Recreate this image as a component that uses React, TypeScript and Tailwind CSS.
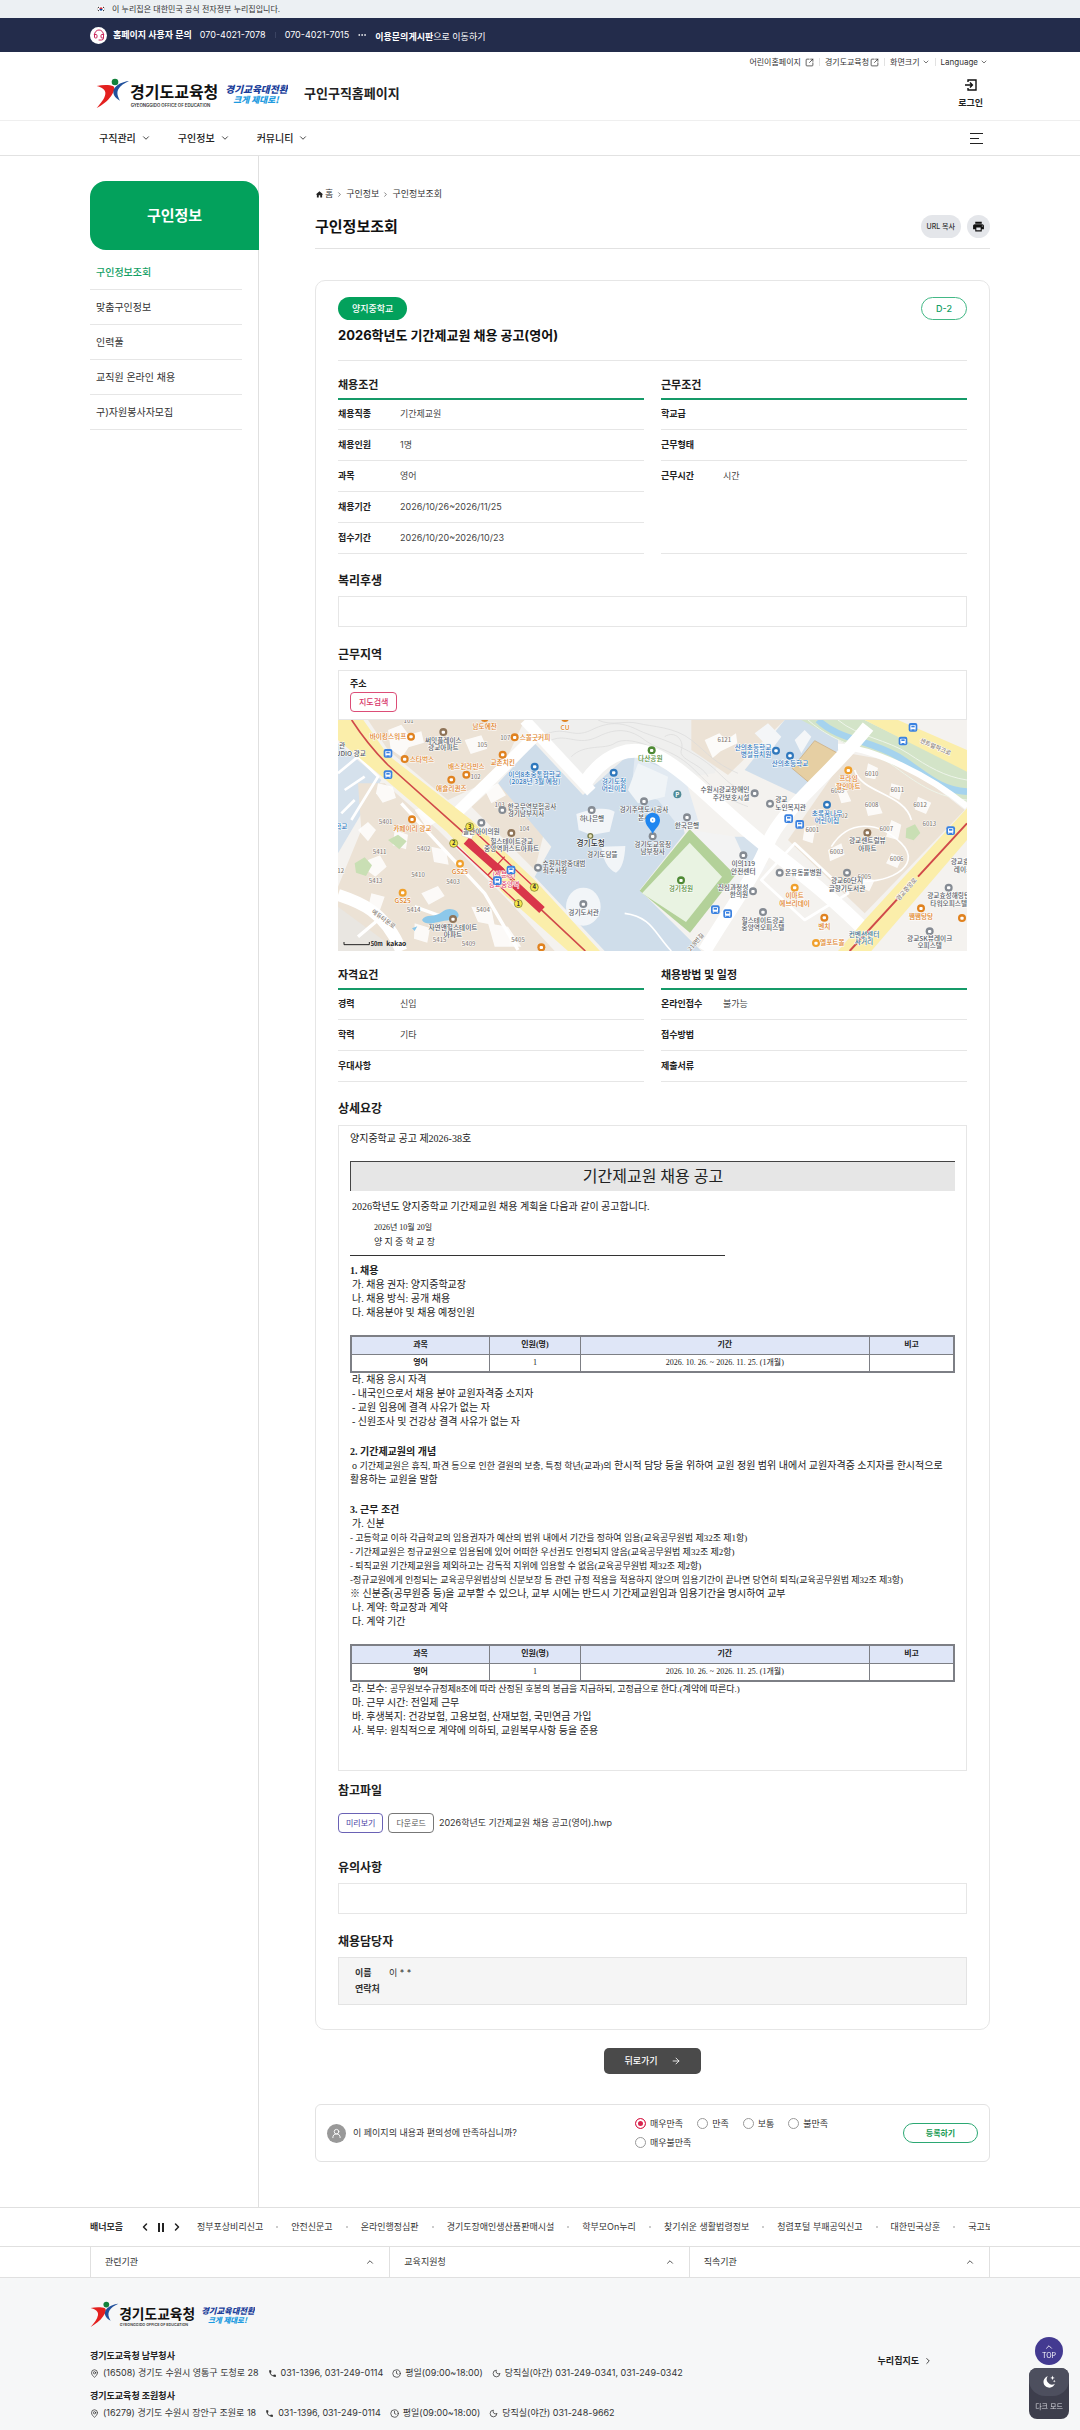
import type { ReactNode } from "react";
import {
  ArrowRight,
  ChevronDown,
  ChevronLeft,
  ChevronRight,
  ChevronUp,
  Clock,
  Ellipsis,
  Headset,
  MapPin,
  Moon,
  SquareArrowOutUpRight,
  UserRound,
} from "lucide-react";
import { MdHome, MdPhone, MdPrint } from "react-icons/md";

const menus = ["구직관리", "구인정보", "커뮤니티"];
const sideMenus = ["구인정보조회", "맞춤구인정보", "인력풀", "교직원 온라인 채용", "구)자원봉사자모집"];
const banners = [
  "정부포상비리신고",
  "안전신문고",
  "온라인행정심판",
  "경기도장애인생산품판매시설",
  "학부모On누리",
  "찾기쉬운 생활법령정보",
  "청렴포털 부패공익신고",
  "대한민국상훈",
  "국고보조금",
];
const offices = [
  {
    name: "경기도교육청 남부청사",
    address: "(16508) 경기도 수원시 영통구 도청로 28",
    tel: "031-1396, 031-249-0114",
    night: "당직실(야간) 031-249-0341, 031-249-0342",
  },
  {
    name: "경기도교육청 조원청사",
    address: "(16279) 경기도 수원시 장안구 조원로 18",
    tel: "031-1396, 031-249-0114",
    night: "당직실(야간) 031-248-9662",
  },
];

const ORANGE = "#e0821f";
const GRAY = "#555a63";
const BLUE = "#2f78bd";
const GREEN = "#4f8a35";
const BROWN = "#8f7458";

type Place = { x: number; y: number; t: string[]; c: string; ix?: number; iy?: number; ic?: string; dx?: number };

const places: Place[] = [
  { x: 150, y: 57, t: ["바이킹스워프"], c: ORANGE, ix: 219, iy: 50 },
  { x: 316, y: 69, t: ["써밋플레이스", "광교아파트"], c: GRAY, ix: 316, iy: 36, ic: BROWN },
  { x: 440, y: 26, t: ["남도예찬"], c: ORANGE, ix: 440, iy: -6 },
  { x: 681, y: 29, t: ["CU"], c: ORANGE, ix: 681, iy: -6 },
  { x: 591, y: 60, t: ["스몰굿커피"], c: ORANGE, ix: 530, iy: 52 },
  { x: 252, y: 125, t: ["스타벅스"], c: ORANGE, ix: 200, iy: 117 },
  { x: 385, y: 146, t: ["배스킨라빈스"], c: ORANGE, ix: 385, iy: 164 },
  { x: 340, y: 212, t: ["애슐리퀸즈"], c: ORANGE, ix: 340, iy: 179 },
  { x: 494, y: 136, t: ["교촌치킨"], c: ORANGE, ix: 494, iy: 104 },
  { x: 590, y: 171, t: ["이의8초중통합학교", "(2028년 3월 예정)"], c: BLUE, ix: 590, iy: 140 },
  { x: 828, y: 191, t: ["경기도청", "어린이집"], c: BLUE, ix: 827, iy: 158 },
  { x: 937, y: 124, t: ["다산공원"], c: GREEN, ix: 941, iy: 91 },
  { x: 582, y: 266, t: ["한국무역보험공사", "경기남부지사"], c: GRAY, ix: 493, iy: 270, dx: -18 },
  { x: 762, y: 303, t: ["하나은행"], c: GRAY, ix: 761, iy: 270 },
  { x: 918, y: 277, t: ["경기주택도시공사", "본사"], c: GRAY, ix: 918, iy: 244 },
  { x: 793, y: 410, t: ["경기도담뜰"], c: GRAY },
  { x: 944, y: 380, t: ["경기도교육청", "남부청사"], c: GRAY, ix: 944, iy: 349 },
  { x: 678, y: 438, t: ["수원지방중대범", "죄수사청"], c: GRAY, ix: 600, iy: 443, dx: -27 },
  { x: 521, y: 372, t: ["힐스테이트광교", "중앙역퍼스트아파트"], c: GRAY, ix: 520, iy: 339, ic: BROWN },
  { x: 430, y: 341, t: ["올찬아이의원"], c: GRAY, ix: 430, iy: 308 },
  { x: 223, y: 332, t: ["카페이리 광교"], c: ORANGE, ix: 222, iy: 298 },
  { x: 366, y: 463, t: ["GS25"], c: ORANGE, ix: 366, iy: 431, ic: "#f0a02c" },
  { x: 194, y: 550, t: ["GS25"], c: ORANGE, ix: 194, iy: 518, ic: "#f0a02c" },
  { x: 345, y: 630, t: ["자연앤힐스테이트", "아파트"], c: GRAY, ix: 345, iy: 597, ic: BROWN },
  { x: 737, y: 585, t: ["경기도서관"], c: GRAY, ix: 736, iy: 552 },
  { x: 10, y: 326, t: ["학교"], c: BLUE },
  { x: 12, y: 84, t: ["관"], c: GRAY },
  { x: 38, y: 107, t: ["UDIO 광교"], c: GRAY },
  { x: 1245, y: 89, t: ["산의초등학교", "병설유치원"], c: BLUE, ix: 1314, iy: 92, dx: 9 },
  { x: 1356, y: 139, t: ["산의초등학교"], c: BLUE, ix: 1356, iy: 107 },
  { x: 1161, y: 217, t: ["수원시광교장애인", "주간보호시설"], c: GRAY, ix: 1250, iy: 220, dx: 18 },
  { x: 1330, y: 247, t: ["광교", "노인복지관"], c: GRAY, ix: 1296, iy: 251, dx: 28 },
  { x: 1047, y: 325, t: ["한국은행"], c: GRAY, ix: 1047, iy: 292 },
  { x: 1467, y: 287, t: ["초록꿈나무", "어린이집"], c: BLUE, ix: 1467, iy: 254 },
  { x: 1531, y: 184, t: ["프라임", "할인마트"], c: ORANGE, ix: 1531, iy: 151, ic: "#f0a02c" },
  { x: 1588, y: 370, t: ["광교센트럴뷰", "아파트"], c: GRAY, ix: 1588, iy: 338, ic: BROWN },
  { x: 1216, y: 439, t: ["이의119", "안전센터"], c: GRAY, ix: 1216, iy: 406 },
  { x: 1396, y: 465, t: ["온유동물병원"], c: GRAY, ix: 1325, iy: 458 },
  { x: 1029, y: 514, t: ["경기정원"], c: GREEN, ix: 1029, iy: 481 },
  { x: 1185, y: 510, t: ["진심과정성", "한의원"], c: GRAY, ix: 1245, iy: 514, dx: 18 },
  { x: 1370, y: 535, t: ["이마트", "에브리데이"], c: ORANGE, ix: 1370, iy: 503, ic: "#f0a02c" },
  { x: 1527, y: 490, t: ["광교60단지", "글향기도서관"], c: GRAY, ix: 1527, iy: 458 },
  { x: 1275, y: 609, t: ["힐스테이트광교", "중앙역오피스텔"], c: GRAY, ix: 1275, iy: 576 },
  { x: 1459, y: 626, t: ["벤치"], c: ORANGE, ix: 1459, iy: 593 },
  { x: 1483, y: 675, t: ["엘포트몰"], c: ORANGE, ix: 1434, iy: 669, ic: "#f0a02c" },
  { x: 1578, y: 651, t: ["컨벤션센터", "사거리"], c: "#3f7390" },
  { x: 1875, y: 433, t: ["광교효성", "레이크"], c: GRAY },
  { x: 1832, y: 535, t: ["광교효성해링턴", "타워오피스텔"], c: GRAY, ix: 1832, iy: 503 },
  { x: 1749, y: 598, t: ["쨈쨈탕탕"], c: ORANGE, ix: 1749, iy: 565 },
  { x: 1775, y: 663, t: ["광교SK뷰레이크", "오피스텔"], c: GRAY, ix: 1775, iy: 634 },
  { x: 610, y: 682, t: [], c: ORANGE, ix: 610, iy: 682 },
  { x: 1872, y: 594, t: [], c: ORANGE, ix: 1872, iy: 594 },
];

const lots: [string, number, number][] = [
  ["101", 212, 8], ["107", 502, 59], ["105", 433, 81], ["102", 413, 176], ["103", 485, 262], ["104", 559, 332],
  ["5401", 143, 312], ["5402", 257, 393], ["5411", 125, 403], ["5410", 240, 470], ["5413", 113, 488],
  ["5403", 345, 491], ["5414", 227, 577], ["5404", 435, 577], ["5415", 305, 667], ["5409", 392, 677],
  ["5405", 540, 667], ["12", 8, 458], ["6121", 1159, 67], ["6009", 1499, 219], ["6010", 1601, 168],
  ["6011", 1678, 215], ["6012", 1746, 261], ["6008", 1601, 261], ["6002", 1509, 294], ["6013", 1774, 318],
  ["6007", 1645, 333], ["6001", 1423, 336], ["6003", 1496, 403], ["6006", 1676, 422], ["6005", 1579, 476],
];

const whiteBuildings = [
  "M150 30l40-16 22 30 38-10 8 34-46 14-20 30-34-24z",
  "M120 190l44 10 10 34-40 14-20-28z",
  "M90 420l36-14 20 34-34 30-24-18z",
  "M230 270l60-24 30 44-54 34z",
  "M170 330l40 14-6 44-40-12z",
  "M280 380l44 10 8 44-44-8z",
  "M60 330l30-24 24 24-24 34z",
  "M100 520l40 10-14 40-34-14z",
  "M250 520l50-22 20 30-48 26z",
  "M400 560l60 6 10 50-50-10z",
  "M450 610l60 10 40 60-80 0z",
  "M230 610l46 14-8 44-40-12z",
  "M380 60l50-14 18 40-50 16z",
  "M440 210l40-20 24 36-44 24z",
  "M1100 60l44-20 20 20 30-20 4 30-50 24-24 20z",
  "M1490 190l30 10 20 44-30 6z",
  "M1590 130l30 14-8 34-30-6z",
  "M1660 190l34 10-10 40-30-14z",
  "M1580 250l40-4 14 34-44 8z",
  "M1740 230l40 18-16 34-34-14z",
  "M1660 300l30 14-10 46-36-10z",
  "M1470 390l40-20 10 34-44 20z",
  "M1660 400l34 10-16 34-34-14z",
  "M1570 470l40 10-16 34-30-14z",
  "M1400 320l34-4-10 54-30-10z",
];

function Bus({ x, y }: { x: number; y: number }) {
  return (
    <g transform={`translate(${x} ${y})`}>
      <rect x="-13" y="-13" width="26" height="26" rx="6" fill="#3b82e0" />
      <rect x="-8" y="-7" width="16" height="13" rx="2" fill="#fff" />
      <rect x="-5" y="-5" width="10" height="5" fill="#3b82e0" />
      <path d="M-6 6v3M6 6v3" stroke="#fff" strokeWidth="3" />
    </g>
  );
}

function AreaMap() {
  return (
    <svg
      viewBox="0 0 1887 693"
      role="img"
      aria-label="근무지역 지도"
      className="block w-full font-['Noto_Sans_CJK_KR',sans-serif] font-medium"
    >
      <rect width="1887" height="693" fill="#f4f2ef" />
      {/* land use blocks */}
      <path d="M90 0H560L480 170 330 240 150 90z" fill="#ece2d5" />
      <path d="M400 260L480 190 620 330 590 450 440 300z" fill="#ece2d5" />
      <path d="M0 70L130 180 0 400z" fill="#d5e1ec" />
      <path d="M60 190L140 190 300 330 500 530 650 693H0V500L70 330z" fill="#ece2d5" />
      <path d="M0 560L180 693H0z" fill="#e9e6e1" />
      <path d="M0 160l60-50 60 60-80 130M20 210l60-40M10 280l40-40" fill="none" stroke="#fff" strokeWidth="8" />
      <path d="M560 0H1180L1130 160 760 210 700 160z" fill="#efefee" />
      <path d="M480 190L590 70 735 225 900 80 1010 180 1040 340 905 510 1090 693H800L590 470 640 380z" fill="#cfddea" />
      <path d="M890 110L1040 170 1080 300 1030 330 960 240 880 220z" fill="#e2eaf2" />
      <path d="M1060 0H1340L1170 165 1060 90z" fill="#ece2d5" />
      <path d="M1340 0H1500L1500 90 1400 235 1220 150z" fill="#d0deeb" />
      <path d="M1250 40l40-30 40 40-30 40zM1370 60l30-30 20 20-30 50z" fill="#f4f6f8" />
      <path d="M1430 62L1500 100 1428 200 1362 145z" fill="#e6cfa3" stroke="#c9a877" strokeWidth="2" />
      <path d="M1530 100L1700 130 1880 270 1580 580 1350 360z" fill="#ece2d5" />
      <path d="M1060 330L1190 350 1290 440 1190 540 1100 470z" fill="#f3f3f3" />
      <path d="M1190 350l40 0 60 60-50 50z" fill="#d5e1ec" />
      {/* riverside */}
      <path d="M1390 0H1580L1887 150V245L1700 150 1520 70z" fill="#d3e4c8" />
      <path d="M1440 0C1500 60 1600 60 1680 110S1800 210 1887 215" fill="none" stroke="#a5d3ee" strokeWidth="20" />
      <path d="M1410 0C1500 80 1590 80 1670 140S1800 230 1887 240M1500 0C1560 50 1650 60 1710 100S1820 170 1887 180" fill="none" stroke="#eef5ea" strokeWidth="3" />
      {/* contour lines of the hill */}
      <g fill="none" stroke="#d9d9d9" strokeWidth="2">
        <path d="M610 50C680 10 700 60 760 30S860 10 900 30 1000 60 1080 110 1150 190 1250 230" />
        <path d="M640 60C690 40 720 80 780 50S880 30 920 60 1010 90 1070 150 1150 230 1230 260" />
        <path d="M700 110C740 70 800 90 830 70S920 70 960 90 1050 140 1080 190" />
        <path d="M780 0C820 20 860 0 900 10S1010 20 1060 60 1130 130 1200 160" />
        <path d="M980 50c30-20 60 10 50 40s60 40 80 80" />
      </g>
      {/* white streets */}
      <g fill="none" stroke="#fff" strokeLinejoin="round">
        <path d="M560 0L760 215" strokeWidth="34" />
        <path d="M345 290L590 50" strokeWidth="34" />
        <path d="M740 190C800 100 880 70 960 110S1130 250 1250 350 1450 500 1590 640" strokeWidth="42" />
        <path d="M1100 693C1180 560 1250 470 1290 370S1480 160 1590 20" strokeWidth="40" />
        <path d="M0 525C60 545 140 570 190 693" strokeWidth="36" />
        <path d="M190 250L440 520 540 690M60 650L120 600M230 560L340 600" strokeWidth="10" />
        <path d="M1500 80C1600 80 1780 170 1887 260" strokeWidth="18" />
        <path d="M1270 480L1370 370 1530 520 1400 600z" strokeWidth="8" />
        <path d="M1480 380C1530 300 1620 300 1690 370S1640 500 1540 480M1550 150C1570 220 1700 220 1720 300" strokeWidth="5" />
        <path d="M860 580C940 590 950 640 1000 693" strokeWidth="5" />
      </g>
      <path d="M715 282C770 262 810 262 830 275L815 335 760 345 722 330zM790 380l72-2c-2 40-10 70-28 80-24-10-40-40-44-78z" fill="#f2f5f8" />
      <ellipse cx="736" cy="560" rx="52" ry="57" fill="#f2f5f8" />
      <path d="M900 130l90 40-10 60-80 20-30-40z" fill="#f0f4f7" />
      <g fill="#fff" opacity="0.85">
        {whiteBuildings.map((d) => (
          <path d={d} key={d} />
        ))}
      </g>
      <path d="M50 430l30-18 22 24-18 32-30-10zM150 360l30-16 26 20-22 24zM1705 325l26-12 16 26-20 22-24-8z" fill="#c9dfb4" />
      <path d="M252 600c10-20 40-6 60-24s50-6 50 10-30 14-50 18-50 14-60-4zM222 625l16-6-8 14z" fill="#8cc8ea" />
      {/* garden */}
      <path d="M1055 328L1192 465 1056 638 905 512z" fill="#b3d199" />
      <path d="M1055 368L1152 470 1044 606 912 520z" fill="#e9f3e2" />
      {/* main roads and the railway */}
      <path d="M0 0H76L150 105 400 300 590 480 786 693H690L506 530 326 335 126 165 0 60z" fill="#fbeeaa" />
      <path d="M1580 0H1680L1887 90V155L1620 20z" fill="#fbeeaa" />
      <path d="M1887 265V360L1600 693H1500L1580 600z" fill="#fbeeaa" />
      <path d="M41 0C80 60 110 95 150 135L390 350 600 560 742 693" fill="none" stroke="#d04a4a" strokeWidth="5" />
      <path d="M1887 310L1740 470M1680 535L1535 693" fill="none" stroke="#d04a4a" strokeWidth="6" />
      <path d="M385 362L490 455M528 492L612 570" stroke="#d9364a" strokeWidth="24" />
      <g fill="none" stroke="#d9364a" strokeWidth="4">
        <path d="M395 320L589 502M347 370L541 551M450 465L500 410M480 432L530 480" />
      </g>
      <path d="M375 335l30 10-4 12-30-10z" fill="#fff" stroke="#bbb" />
      <g fontSize="18" fill="#8a8178" textAnchor="middle" stroke="#fff" strokeWidth="3" paintOrder="stroke">
        {lots.map(([t, x, y]) => (
          <text key={t + x} x={x} y={y}>{t}</text>
        ))}
        <text x="0" y="0" transform="translate(133 602) rotate(36)">에듀타운로</text>
        <text x="0" y="0" transform="translate(1790 86) rotate(24)">센트럴파크로</text>
        <text x="0" y="0" transform="translate(1710 512) rotate(-49)">광교중앙로</text>
        <text x="0" y="0" transform="translate(1078 670) rotate(-50)">218번길</text>
      </g>
      {places.map((p) => (
        <g key={p.x + "-" + p.y}>
          {p.ix !== undefined && (
            <g>
              <circle cx={p.ix} cy={p.iy} r="12" fill={p.ic ?? (p.c === GRAY ? "#858b93" : p.c)} />
              <rect x={p.ix - 5} y={(p.iy ?? 0) - 4} width="10" height="9" rx="3" fill="#fff" />
            </g>
          )}
          <g fontSize="20" textAnchor="middle" fill={p.c} stroke="#fff" strokeWidth="3" paintOrder="stroke">
            {p.t.map((line, i) => (
              <text key={line} x={p.x + (i ? p.dx ?? 0 : 0)} y={p.y + i * 22}>{line}</text>
            ))}
          </g>
        </g>
      ))}
      <circle cx="757" cy="348" r="7" fill="#e8e3b8" stroke="#777a4a" strokeWidth="4" />
      <text x="758" y="378" fontSize="23" textAnchor="middle" fill="#33373d" stroke="#fff" strokeWidth="3" paintOrder="stroke">경기도청</text>
      <g fontSize="20" textAnchor="middle" fill="#e2476a" stroke="#fff" strokeWidth="3" paintOrder="stroke">
        <text x="498" y="472">(신분당)</text>
        <text x="498" y="500">광교중앙역</text>
      </g>
      <g fontSize="18" fontWeight="700" textAnchor="middle">
        {[[395, 320, 3], [347, 370, 2], [589, 502, 4], [541, 551, 1]].map(([x, y, n]) => (
          <g key={n}>
            <circle cx={x} cy={y} r="12" fill="#f5e84c" stroke="#6d6a2b" strokeWidth="2" />
            <text x={x} y={y + 6} fill="#333">{n}</text>
          </g>
        ))}
      </g>
      {[[150, 100], [150, 164], [519, 450], [478, 482], [1725, 22], [1695, 63], [1352, 296], [1385, 313], [1838, 332], [1132, 569], [1169, 581]].map(
        ([x, y]) => (
          <Bus key={`${x}-${y}`} x={x} y={y} />
        ),
      )}
      <circle cx="1018" cy="223" r="12" fill="#4f8a96" />
      <text x="1018" y="230" fontSize="18" fontWeight="700" textAnchor="middle" fill="#fff">P</text>
      <path d="M944 342c-6-16-22-24-22-42a22 22 0 0 1 44 0c0 18-16 26-22 42z" fill="#1f86f0" />
      <circle cx="944" cy="300" r="8" fill="#fff" />
      <circle cx="944" cy="300" r="2" fill="#1f86f0" />
      <path d="M18 666v8h76v-8" fill="none" stroke="#222" strokeWidth="3" />
      <text x="98" y="679" fontSize="17" fontWeight="700" fill="#222">50m</text>
      <text x="145" y="679" fontSize="20" fontWeight="700" fill="#222">kakao</text>
    </svg>
  );
}

function Logo({ className }: { className: string }) {
  return (
    <svg viewBox="0 0 576 93" role="img" aria-label="경기도교육청" className={className}>
      <circle cx="57" cy="12" r="10" fill="#12813b" />
      <path d="M2 24C20 20 42 20 52 25c7 5 2 17-6 28C36 68 18 82 2 90c13-15 24-28 26-42C30 36 18 28 2 24z" fill="#e3201f" />
      <path d="M99 9C80 11 61 20 54 33c-6 13 2 27 18 35-8-14-10-24-5-34 6-11 18-19 32-25z" fill="#20509c" />
      <g className="font-['Noto_Sans_CJK_KR',sans-serif]">
        <text x="102" y="61" fontSize="48" fontWeight="700" fill="#111">경기도교육청</text>
        <g fontStyle="italic" fontWeight="900">
          <text x="388" y="46" fontSize="29" fill="#1c3f9b">경기교육대전환</text>
          <text x="412" y="76" fontSize="26" fill="#1d9be0">크게 제대로!</text>
        </g>
      </g>
      <text x="104" y="86" fontSize="13" fontWeight="600" fill="#333" className="font-['Inter',sans-serif]">GYEONGGIDO OFFICE OF EDUCATION</text>
    </svg>
  );
}

function Title({ children, className = "" }: { children: ReactNode; className?: string }) {
  return <h4 className={`text-xs leading-5 font-bold text-[#1d1d1d] ${className}`}>{children}</h4>;
}

function InfoList({ title, rows }: { title: string; rows: [string, string][] }) {
  return (
    <section className="flex flex-1 flex-col">
      <h4 className="border-b-2 border-[#159a68] pb-[5px] text-[11px] leading-4 font-bold text-[#1d1d1d]">{title}</h4>
      <dl className="flex flex-1 flex-col">
        {rows.map(([label, value]) => (
          <div className="flex border-b border-[#e6e6e6] pt-2 pb-2 leading-[14px] first:pt-[7px] last:flex-1" key={label}>
            <dt className="w-[62px] font-bold text-[#222]">{label}</dt>
            <dd className="text-[#444]">{value}</dd>
          </div>
        ))}
      </dl>
    </section>
  );
}

function PeriodTable() {
  return (
    <table className="w-full table-fixed border-collapse border-2 border-[#7d7f85] text-center text-[8px] leading-[14px]">
      <thead>
        <tr className="h-[18px] bg-[#dfe6f7]">
          <th className="w-[23%] border border-[#7d7f85]">과목</th>
          <th className="w-[15%] border border-[#7d7f85]">인원(명)</th>
          <th className="border border-[#7d7f85]">기간</th>
          <th className="w-[14%] border border-[#7d7f85]">비고</th>
        </tr>
      </thead>
      <tbody>
        <tr className="h-[18px]">
          <td className="border border-[#7d7f85] font-bold">영어</td>
          <td className="border border-[#7d7f85]">1</td>
          <td className="border border-[#7d7f85]">2026. 10. 26. ~ 2026. 11. 25. (1개월)</td>
          <td className="border border-[#7d7f85]"></td>
        </tr>
      </tbody>
    </table>
  );
}

function Notice() {
  return (
    <article className="mt-[6px] border border-[#e6e6e6] px-[11px] pt-[6px] pb-8 font-['Liberation_Serif','Noto_Sans_CJK_KR',serif] text-[10px] leading-[14px] break-keep text-[#222]">
      <p>양지중학교 공고 제2026-38호</p>
      <h5 className="mt-[15px] border-t border-l border-[#444] bg-[#e6e6e6] text-center text-base leading-[29px]">기간제교원 채용 공고</h5>
      <p className="mt-[9px] pl-[2px]">2026학년도 양지중학교 기간제교원 채용 계획을 다음과 같이 공고합니다.</p>
      <div className="mt-[7px] w-[62%] border-b border-[#333] pb-[6px] pl-6">
        <p className="text-[8px]">2026년 10월 20일</p>
        <p className="text-[9px]">양 지 중 학 교 장</p>
      </div>
      <p className="mt-2 font-bold">1. 채용</p>
      <div className="mb-[15px] pl-[2px]">
        <p>가. 채용 권자: 양지중학교장</p>
        <p>나. 채용 방식: 공개 채용</p>
        <p>다. 채용분야 및 채용 예정인원</p>
      </div>
      <PeriodTable />
      <div className="mb-4 pl-[2px]">
        <p>라. 채용 응시 자격</p>
        <p>- 내국인으로서 채용 분야 교원자격증 소지자</p>
        <p>- 교원 임용에 결격 사유가 없는 자</p>
        <p>- 신원조사 및 건강상 결격 사유가 없는 자</p>
      </div>
      <p className="font-bold">2. 기간제교원의 개념</p>
      <p className="mb-4 indent-[2px]">
        o <span className="text-[9px]">기간제교원은 휴직, 파견 등으로 인한 결원의 보충, 특정 학년(교과)의</span> 한시적 담당 등을 위하여 교원 정원 범위 내에서
        교원자격증 소지자를 한시적으로 활용하는 교원을 말함
      </p>
      <p className="font-bold">3. 근무 조건</p>
      <p className="pl-[2px]">가. 신분</p>
      <div className="text-[9px]">
        <p>- 고등학교 이하 각급학교의 임용권자가 예산의 범위 내에서 기간을 정하여 임용(교육공무원법 제32조 제1항)</p>
        <p>- 기간제교원은 정규교원으로 임용됨에 있어 어떠한 우선권도 인정되지 않음(교육공무원법 제32조 제2항)</p>
        <p>- 퇴직교원 기간제교원을 제외하고는 감독적 지위에 임용할 수 없음(교육공무원법 제32조 제2항)</p>
        <p>-정규교원에게 인정되는 교육공무원법상의 신분보장 등 관련 규정 적용을 적용하지 않으며 임용기간이 끝나면 당연히 퇴직(교육공무원법 제32조 제3항)</p>
      </div>
      <p>※ 신분증(공무원증 등)을 교부할 수 있으나, 교부 시에는 반드시 기간제교원임과 임용기간을 명시하여 교부</p>
      <div className="mb-[15px] pl-[2px]">
        <p>나. 계약: 학교장과 계약</p>
        <p>다. 계약 기간</p>
      </div>
      <PeriodTable />
      <div className="pl-[2px]">
        <p>
          라. 보수: <span className="text-[9px]">공무원보수규정제8조에 따라 산정된 호봉의 봉급을 지급하되, 고정급으로 한다.(계약에 따른다.)</span>
        </p>
        <p>마. 근무 시간: 전일제 근무</p>
        <p>바. 후생복지: 건강보험, 고용보험, 산재보험, 국민연금 가입</p>
        <p>사. 복무: 원칙적으로 계약에 의하되, 교원복무사항 등을 준용</p>
      </div>
    </article>
  );
}

export default function App() {
  return (
    <div className="bg-white font-['Inter','Noto_Sans_CJK_KR',sans-serif] text-[9px] leading-[14px] text-[#333]">
      <div className="bg-[#ecf0f3]">
        <div className="mx-auto flex h-[18px] w-5/6 items-center gap-[7px] pl-[7px] text-[8px]">
          <svg viewBox="0 0 24 16" className="h-[6px] w-2">
            <rect width="24" height="16" fill="#fff" />
            <path d="M7 8a5 5 0 0 1 10 0z" fill="#cd2e3a" />
            <path d="M7 8a5 5 0 0 0 10 0z" fill="#0047a0" />
            <path d="M2 5l4-3M2 11l4 3M18 2l4 3M18 14l4-3" stroke="#222" strokeWidth="3" />
          </svg>
          <span>이 누리집은 대한민국 공식 전자정부 누리집입니다.</span>
        </div>
      </div>

      <div className="bg-[#232c4b] text-white">
        <div className="mx-auto flex h-[34px] w-5/6 items-center">
          <span className="mr-[6px] flex h-[17px] w-[17px] items-center justify-center rounded-full bg-white">
            <Headset className="h-3 w-3 text-[#c9255a]" />
          </span>
          <strong className="mr-2">홈페이지 사용자 문의</strong>
          <span>070-4021-7078</span>
          <span className="mx-[9px] h-[6px] w-px bg-[#3a4362]"></span>
          <span>070-4021-7015</span>
          <Ellipsis className="mx-2 h-[10px] w-[10px]" />
          <a href="#board" className="pt-1">
            <strong>이용문의게시판</strong>으로 이동하기
          </a>
        </div>
      </div>

      <header>
        <div className="border-b border-[#efefef]">
          <div className="mx-auto flex h-[68px] w-5/6 justify-between">
            <div className="flex items-center gap-4 pt-[14px] pl-[6px]">
              <Logo className="h-[31px] w-48" />
              <h1 className="text-[13px] leading-5 font-bold text-[#222]">구인구직홈페이지</h1>
            </div>
            <div className="flex flex-col items-end pr-[2px]">
              <div className="flex h-5 items-center gap-[5px] text-[8px]">
                <a href="#kids" className="flex items-center gap-1">
                  어린이홈페이지 <SquareArrowOutUpRight className="h-[9px] w-[9px]" />
                </a>
                <i className="h-2 w-px bg-[#e2e2e2]"></i>
                <a href="#goe" className="flex items-center gap-px">
                  경기도교육청 <SquareArrowOutUpRight className="h-[9px] w-[9px]" />
                </a>
                <i className="h-2 w-px bg-[#e2e2e2]"></i>
                <button className="flex items-center gap-[2px]">
                  화면크기 <ChevronDown className="h-2 w-2" />
                </button>
                <i className="h-2 w-px bg-[#e2e2e2]"></i>
                <button className="flex items-center gap-[2px]">
                  Language <ChevronDown className="h-2 w-2" />
                </button>
              </div>
              <a href="#login" className="mt-[6px] flex flex-col items-center gap-1 pr-[5px] font-bold text-[#222]">
                <svg viewBox="0 0 14 14" className="h-[14px] w-[14px]" fill="none" stroke="#111" strokeWidth="1.4">
                  <path d="M4 4V2h8v10H4v-2M1 7h7M6 4.6L8.4 7 6 9.4" />
                </svg>
                로그인
              </a>
            </div>
          </div>
        </div>
        <nav className="border-b border-[#e2e2e2]">
          <div className="mx-auto flex h-[34px] w-5/6 items-center justify-between pr-[7px] pl-[9px]">
            <ul className="flex gap-[27px]">
              {menus.map((m) => (
                <li key={m}>
                  <button className="flex items-center gap-[5px] text-[10px] font-medium text-[#222]">
                    {m} <ChevronDown className="h-[10px] w-[10px]" />
                  </button>
                </li>
              ))}
            </ul>
            <button aria-label="전체메뉴" className="flex flex-col gap-1">
              <i className="h-px w-[13px] bg-[#222]"></i>
              <i className="h-px w-[9px] bg-[#222]"></i>
              <i className="h-px w-[13px] bg-[#222]"></i>
            </button>
          </div>
        </nav>
      </header>

      <div className="mx-auto flex w-5/6">
        <aside className="w-[169px] shrink-0 border-r border-[#e0e0e0] pt-[25px]">
          <h2 className="-mr-px flex h-[69px] items-center justify-center rounded-2xl rounded-br-none bg-[#03a15c] text-[15px] font-bold text-white">
            구인정보
          </h2>
          <ul className="mt-[5px] mr-4 text-[10px]">
            {sideMenus.map((m, i) => (
              <li className="border-b border-[#e6e6e6]" key={m}>
                <a href="#menu" className={`block px-[6px] py-[10px] ${i === 0 ? "font-medium text-[#13a065]" : ""}`}>
                  {m}
                </a>
              </li>
            ))}
          </ul>
        </aside>

        <main className="ml-14 min-w-0 flex-1 pt-[31px] pb-[45px]">
          <div className="flex items-center gap-[3px]">
            <MdHome className="-mr-[2px] h-[9px] w-[9px] text-[#222]" />
            <span>홈</span>
            <ChevronRight className="h-[7px] w-[7px]" />
            <span>구인정보</span>
            <ChevronRight className="h-[7px] w-[7px]" />
            <span>구인정보조회</span>
          </div>
          <div className="mt-[14px] flex items-center justify-between border-b border-[#e2e2e2] pb-[10px]">
            <h3 className="text-[15px] font-bold text-[#111]">구인정보조회</h3>
            <div className="flex gap-[6px]">
              <button className="h-[23px] rounded-full bg-[#e4e6ea] px-[6px] text-[7px] font-medium">URL 복사</button>
              <button aria-label="인쇄" className="flex h-[23px] w-[23px] items-center justify-center rounded-full bg-[#e4e6ea]">
                <MdPrint className="h-[13px] w-[13px] text-[#111]" />
              </button>
            </div>
          </div>

          <div className="mt-[31px] rounded-[10px] border border-[#e6e6e6] px-[22px] pt-4 pb-6">
            <div className="border-b border-[#e6e6e6] pb-[15px]">
              <div className="flex justify-between">
                <span className="flex h-[23px] items-center rounded-full bg-[#03a15c] px-[14px] font-medium text-white">양지중학교</span>
                <span className="flex h-[23px] items-center rounded-full border border-[#43b886] px-[14px] font-medium text-[#13a065]">D-2</span>
              </div>
              <h3 className="mt-[5px] text-[13px] leading-5 font-bold text-[#111]">2026학년도 기간제교원 채용 공고(영어)</h3>
            </div>

            <div className="mt-4 flex gap-[17px]">
              <InfoList
                title="채용조건"
                rows={[
                  ["채용직종", "기간제교원"],
                  ["채용인원", "1명"],
                  ["과목", "영어"],
                  ["채용기간", "2026/10/26~2026/11/25"],
                  ["접수기간", "2026/10/20~2026/10/23"],
                ]}
              />
              <InfoList
                title="근무조건"
                rows={[
                  ["학교급", ""],
                  ["근무형태", ""],
                  ["근무시간", "시간"],
                ]}
              />
            </div>

            <Title className="mt-[17px]">복리후생</Title>
            <div className="mt-[5px] h-[31px] border border-[#e6e6e6]"></div>

            <Title className="mt-[18px]">근무지역</Title>
            <div className="mt-[5px] border border-[#e6e6e6] px-[11px] pt-[5px] pb-[7px]">
              <p className="leading-4 font-bold text-[#222]">주소</p>
              <button className="flex h-5 items-center rounded-sm border border-[#dc4d77] px-2 text-[8px] font-medium text-[#d8356a]">지도검색</button>
            </div>
            <AreaMap />

            <div className="mt-4 flex gap-[17px]">
              <InfoList title="자격요건" rows={[["경력", "신입"], ["학력", "기타"], ["우대사항", ""]]} />
              <InfoList title="채용방법 및 일정" rows={[["온라인접수", "불가능"], ["접수방법", ""], ["제출서류", ""]]} />
            </div>

            <Title className="mt-[17px]">상세요강</Title>
            <Notice />

            <Title className="mt-[10px]">참고파일</Title>
            <div className="mt-3 flex items-center gap-[5px]">
              <button className="h-5 rounded-sm border border-[#6a62b5] px-[7px] text-[8px] text-[#4a3fa5]">미리보기</button>
              <button className="h-5 rounded-sm border border-[#777] px-[7px] text-[8px] text-[#555]">다운로드</button>
              <span>2026학년도 기간제교원 채용 공고(영어).hwp</span>
            </div>

            <Title className="mt-[25px]">유의사항</Title>
            <div className="mt-[5px] h-[31px] border border-[#e6e6e6]"></div>

            <Title className="mt-[18px]">채용담당자</Title>
            <dl className="mt-[5px] border border-[#e3e3e3] bg-[#f5f5f5] px-4 py-[7px] leading-4">
              <div className="flex">
                <dt className="w-[34px] font-bold">이름</dt>
                <dd>이 * *</dd>
              </div>
              <div className="flex">
                <dt className="w-[34px] font-bold">연락처</dt>
                <dd></dd>
              </div>
            </dl>
          </div>

          <div className="mt-[18px] flex justify-center">
            <button className="flex h-[26px] items-center gap-[13px] rounded-[5px] bg-[#4a4a4a] px-5 font-medium text-white">
              뒤로가기 <ArrowRight className="h-[10px] w-[10px]" />
            </button>
          </div>

          <form className="mt-[30px] flex items-center rounded-md border border-[#e2e2e2] px-[11px] py-[9px]">
            <span className="mr-[7px] flex h-[19px] w-[19px] items-center justify-center rounded-full bg-[#999]">
              <UserRound className="h-[11px] w-[11px] text-white" />
            </span>
            <p className="flex-1">이 페이지의 내용과 편의성에 만족하십니까?</p>
            <div className="flex w-[240px] flex-wrap gap-x-[14px] pr-4">
              {["매우만족", "만족", "보통", "불만족", "매우불만족"].map((label, i) => (
                <label className="flex h-[19px] items-center gap-1" key={label}>
                  <input
                    type="radio"
                    name="satisfaction"
                    defaultChecked={i === 0}
                    className="h-[11px] w-[11px] appearance-none rounded-full border border-[#999] bg-white checked:border-[#d8254f] checked:bg-[#d8254f] checked:shadow-[inset_0_0_0_2px_white]"
                  />
                  {label}
                </label>
              ))}
            </div>
            <button className="ml-[28px] h-5 w-[75px] rounded-full border border-[#2ba873] text-[8px] font-bold text-[#159a50]">등록하기</button>
          </form>
        </main>
      </div>

      <div className="border-y border-[#e0e0e0]">
        <div className="mx-auto flex h-[38px] w-5/6 items-center">
          <strong className="w-[49px] shrink-0">배너모음</strong>
          <div className="flex w-[58px] shrink-0 items-center gap-1 text-[#222]">
            <button aria-label="이전"><ChevronLeft className="h-3 w-3" strokeWidth={3} /></button>
            <button aria-label="정지" className="flex w-3 justify-center gap-[2px]">
              <i className="h-[9px] w-[2px] bg-[#222]"></i>
              <i className="h-[9px] w-[2px] bg-[#222]"></i>
            </button>
            <button aria-label="다음"><ChevronRight className="h-3 w-3" strokeWidth={3} /></button>
          </div>
          <ul className="flex min-w-0 flex-1 overflow-hidden whitespace-nowrap">
            {banners.map((b, i) => (
              <li className="flex shrink-0 items-center" key={b}>
                {i > 0 && <i className="mx-[13px] h-[2px] w-[2px] rounded-full bg-[#bbb]"></i>}
                <a href="#banner">{b}</a>
              </li>
            ))}
          </ul>
        </div>
      </div>

      <div className="border-b border-[#e0e0e0]">
        <div className="mx-auto grid w-5/6 grid-cols-3 divide-x divide-[#e0e0e0] border-x border-[#e0e0e0]">
          {["관련기관", "교육지원청", "직속기관"].map((m) => (
            <button className="flex h-[30px] items-center justify-between px-[14px]" key={m}>
              {m} <ChevronUp className="h-[10px] w-[10px]" />
            </button>
          ))}
        </div>
      </div>

      <footer className="bg-[#f6f7f8]">
        <div className="mx-auto flex w-5/6 justify-between pt-[23px] pb-3">
          <div>
            <Logo className="h-[27px] w-[165px]" />
            <div className="mt-[21px] flex flex-col gap-[9px]">
              {offices.map((o) => (
                <address className="not-italic" key={o.name}>
                  <strong className="block text-[#222]">{o.name}</strong>
                  <p className="mt-[3px] flex items-center gap-[9px]">
                    <span className="flex items-center gap-1"><MapPin className="h-[9px] w-[9px]" />{o.address}</span>
                    <span className="flex items-center gap-1"><MdPhone className="h-[9px] w-[9px]" />{o.tel}</span>
                    <span className="flex items-center gap-1"><Clock className="h-[9px] w-[9px]" />평일(09:00~18:00)</span>
                    <span className="flex items-center gap-1"><Moon className="h-[9px] w-[9px]" />{o.night}</span>
                  </p>
                </address>
              ))}
            </div>
          </div>
          <a href="#sitemap" className="mt-[53px] mr-[57px] flex items-center gap-1 self-start font-bold text-[#222]">
            누리집지도 <ChevronRight className="h-[10px] w-[10px]" />
          </a>
        </div>
      </footer>

      <div className="fixed right-[11px] bottom-[11px] flex flex-col items-center gap-[3px] text-white">
        <a href="#top" className="flex h-7 w-7 flex-col items-center justify-center rounded-full bg-[#433a91] text-[7px] leading-2">
          <ChevronUp className="h-[10px] w-[10px]" />
          TOP
        </a>
        <button className="flex h-[51px] w-10 flex-col items-center overflow-hidden rounded-lg bg-[#3d3e4c] text-[7px] text-[#d5d6dc]">
          <span className="flex h-7 w-10 items-center justify-center rounded-b-2xl bg-[#4d4f5e]">
            <svg viewBox="0 0 24 24" className="h-[14px] w-[14px]" fill="#fff">
              <path d="M10 2a10 10 0 1 0 12 13A9 9 0 0 1 10 2z" />
              <path d="M18 1l1 3 3 1-3 1-1 3-1-3-3-1 3-1zM21 8l.6 1.9 1.9.6-1.9.6L21 13l-.6-1.9-1.9-.6 1.9-.6z" />
            </svg>
          </span>
          <span className="mt-1">다크 모드</span>
        </button>
      </div>
    </div>
  );
}
